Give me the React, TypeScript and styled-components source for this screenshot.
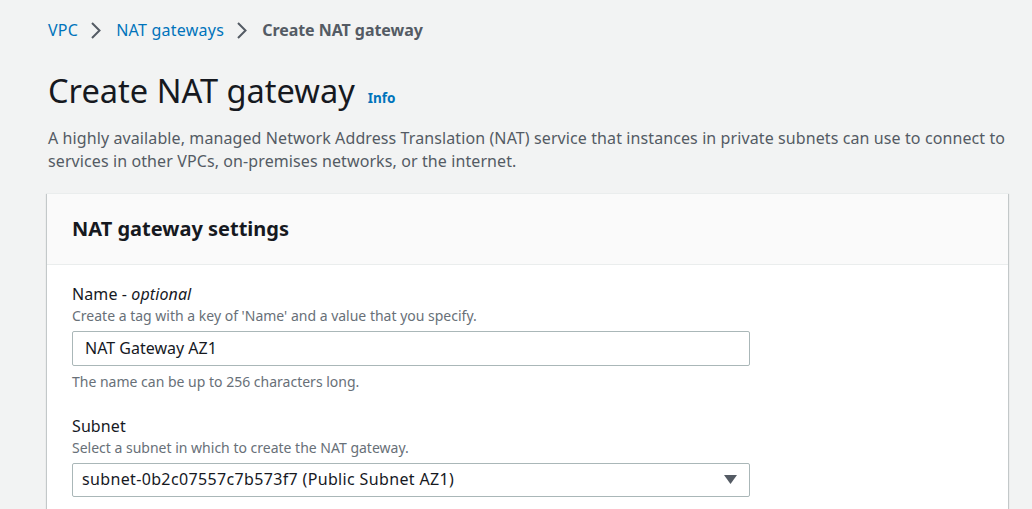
import React from "react";
import styled, { createGlobalStyle } from "styled-components";

const Global = createGlobalStyle`
  html, body { margin: 0; padding: 0; background: #f2f3f3; }
  body { font-family: "Noto Sans", "Open Sans", Arial, sans-serif; color: #16191f; }
  * { box-sizing: border-box; }
`;

const Page = styled.div`
  padding: 19px 24px 0 48px;
  width: 1032px;
  height: 509px;
  overflow: hidden;
`;

const Crumbs = styled.nav`
  display: flex;
  align-items: center;
  height: 22px;
  font-size: 16px;
  letter-spacing: 0.25px;
`;

const CrumbSep = styled.span`
  display: flex;
  align-items: center;
  margin: 0 15px 0 13px;
`;

const CrumbLink = styled.a`
  color: #0073bb;
  text-decoration: none;
`;

const CrumbCurrent = styled.span`
  color: #545b64;
  font-weight: 700;
  letter-spacing: -0.05px;
`;

const TitleRow = styled.div`
  display: flex;
  align-items: baseline;
  gap: 13px;
  margin-top: 28px;
`;

const Title = styled.h1`
  margin: 0;
  font-size: 32.6px;
  font-weight: 400;
  line-height: 44px;
  color: #16191f;
`;

const InfoLink = styled.a`
  color: #0073bb;
  font-size: 13.5px;
  font-weight: 700;
  text-decoration: none;
`;

const Description = styled.p`
  margin: 14px 0 0;
  font-size: 16px;
  line-height: 23px;
  letter-spacing: 0.1px;
  color: #545b64;
`;

const Card = styled.section`
  margin: 20px 0 0 -1px;
  width: 961px;
  background: #fff;
  box-shadow: 0 1px 1px 0 rgba(0, 28, 36, 0.3), 1px 1px 1px 0 rgba(0, 28, 36, 0.15),
    -1px 1px 1px 0 rgba(0, 28, 36, 0.15);
  border-top: 1px solid #eaeded;
`;

const CardHeader = styled.div`
  background: #fafafa;
  border-bottom: 1px solid #eaeded;
  padding: 0 25px 1px;
  height: 71px;
  display: flex;
  align-items: center;
`;

const CardTitle = styled.h2`
  margin: 0;
  font-size: 20px;
  font-weight: 700;
  color: #16191f;
`;

const CardBody = styled.div`
  padding: 17px 24px 20px 25px;
  display: flex;
  flex-direction: column;
  gap: 22px;
`;

const Field = styled.div`
  display: flex;
  flex-direction: column;
`;

const Label = styled.label`
  font-size: 16px;
  line-height: 24px;
  letter-spacing: 0.1px;
  color: #16191f;
  em { font-style: italic; }
`;

const Hint = styled.div`
  font-size: 14px;
  line-height: 20px;
  color: #687078;
`;

const Control = styled.div`
  margin-top: 5px;
  width: 678px;
  height: 35px;
  border: 1px solid #aab7b8;
  border-radius: 2px;
  background: #fff;
  display: flex;
  align-items: center;
  justify-content: space-between;
  padding: 0 12px 1px;
  font-size: 16px;
  color: #16191f;
`;

const SelectControl = styled(Control)`
  padding: 0 12px 2px 9px;
  height: 34px;
`;

const SelectValue = styled.span`
  letter-spacing: 0.35px;
`;

const Constraint = styled.div`
  margin-top: 6px;
  font-size: 14px;
  line-height: 20px;
  color: #687078;
`;

const Chevron = () => (
  <svg width="10" height="17" viewBox="0 0 10 17" fill="none">
    <path d="M1 1 L8.5 8.5 L1 16" stroke="#545b64" strokeWidth="2" />
  </svg>
);

const Caret = () => (
  <svg width="13" height="9" viewBox="0 0 13 9">
    <path d="M0 0 H13 L6.5 9 Z" fill="#545b64" />
  </svg>
);

export default function App() {
  return (
    <>
      <Global />
      <Page>
        <Crumbs>
          <CrumbLink href="#">VPC</CrumbLink>
          <CrumbSep>
            <Chevron />
          </CrumbSep>
          <CrumbLink href="#">NAT gateways</CrumbLink>
          <CrumbSep>
            <Chevron />
          </CrumbSep>
          <CrumbCurrent>Create NAT gateway</CrumbCurrent>
        </Crumbs>
        <TitleRow>
          <Title>Create NAT gateway</Title>
          <InfoLink href="#">Info</InfoLink>
        </TitleRow>
        <Description>
          A highly available, managed Network Address Translation (NAT) service that instances in private subnets can use to connect to services in other VPCs, on-premises networks, or the internet.
        </Description>
        <Card>
          <CardHeader>
            <CardTitle>NAT gateway settings</CardTitle>
          </CardHeader>
          <CardBody>
            <Field>
              <Label>
                Name - <em>optional</em>
              </Label>
              <Hint>Create a tag with a key of 'Name' and a value that you specify.</Hint>
              <Control>NAT Gateway AZ1</Control>
              <Constraint>The name can be up to 256 characters long.</Constraint>
            </Field>
            <Field>
              <Label>Subnet</Label>
              <Hint>Select a subnet in which to create the NAT gateway.</Hint>
              <SelectControl>
                <SelectValue>subnet-0b2c07557c7b573f7 (Public Subnet AZ1)</SelectValue>
                <Caret />
              </SelectControl>
            </Field>
          </CardBody>
        </Card>
      </Page>
    </>
  );
}
